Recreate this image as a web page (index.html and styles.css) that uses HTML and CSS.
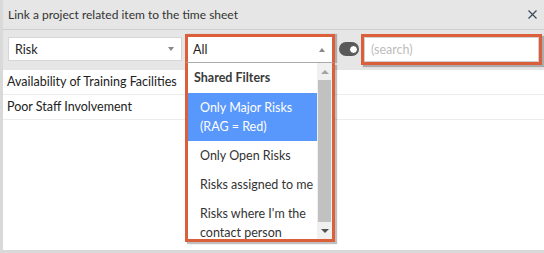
FILE: index.html
```html
<!DOCTYPE html>
<html>
<head>
<meta charset="utf-8">
<link rel="stylesheet" href="styles.css">
</head>
<body>
<div class="dialog">
  <div class="titlebar">
    <span class="title">Link a project related item to the time sheet</span>
    <svg class="close" width="9" height="9" viewBox="0 0 9 9"><path d="M0.5 0.5 L8.5 8.5 M8.5 0.5 L0.5 8.5" stroke="#3d4a5c" stroke-width="1.2" fill="none"/></svg>
  </div>
  <div class="toolbar">
    <div class="select risk"><span>Risk</span><span class="caret down"></span></div>
    <div class="filter">
      <div class="filter-select"><span>All</span><span class="caret up"></span></div>
      <div class="menu">
        <div class="menu-list">
          <div class="group">Shared Filters</div>
          <div class="opt active">Only Major Risks<br>(RAG = Red)</div>
          <div class="opt">Only Open Risks</div>
          <div class="opt">Risks assigned to me</div>
          <div class="opt">Risks where I'm the<br>contact person</div>
        </div>
        <div class="scrollbar">
          <div class="sb-btn"><span class="sb-arrow up-light"></span></div>
          <div class="sb-thumb"></div>
          <div class="sb-btn"><span class="sb-arrow down-dark"></span></div>
        </div>
      </div>
    </div>
    <div class="toggle"><span class="knob"></span></div>
    <div class="search-annot"><input class="search" type="text" placeholder="(search)"></div>
  </div>
  <div class="rows">
    <div class="row">Availability of Training Facilities</div>
    <div class="row">Poor Staff Involvement</div>
  </div>
</div>
</body>
</html>
```

FILE: styles.css
```css
html, body {
  margin: 0;
  padding: 0;
}
body {
  width: 544px;
  height: 253px;
  overflow: hidden;
  background: #d9d9d9;
  font-family: "Lato", "Open Sans", sans-serif;
  color: #333;
}
.dialog {
  margin-left: 3px;
  height: 250px;
  background: #fff;
  display: flex;
  flex-direction: column;
}
.titlebar {
  height: 29px;
  flex: none;
  border-bottom: 1px solid #cfcfcf;
  background: #e6e6e6;
  display: flex;
  align-items: center;
  justify-content: space-between;
  padding: 0 7px 0 5px;
}
.title {
  font-size: 12px;
  color: #333;
}
.close {
  display: block;
}
.toolbar {
  height: 40px;
  flex: none;
  box-sizing: border-box;
  background: #e6e6e6;
  display: flex;
  align-items: flex-start;
  padding: 4px 2px 0 5px;
  position: relative;
  z-index: 2;
}
.risk {
  margin-top: 3px;
  width: 174px;
  height: 24px;
  box-sizing: border-box;
  border: 1px solid #d6d6d6;
  background: #fff;
  display: flex;
  align-items: center;
  justify-content: space-between;
  padding: 0 7px 0 6px;
  font-size: 12.5px;
  color: #222;
}
.caret {
  width: 0;
  height: 0;
  border-left: 3px solid transparent;
  border-right: 3px solid transparent;
}
.caret.down {
  border-top: 4px solid #888;
}
.caret.up {
  border-bottom: 4px solid #888;
}
.filter {
  margin-left: 3px;
  width: 150px;
  position: relative;
}
.filter-select {
  height: 29px;
  box-sizing: border-box;
  border: 3px solid #dc5f3c;
  border-bottom: 1px solid #aaa;
  background: #fff;
  display: flex;
  align-items: center;
  justify-content: space-between;
  padding: 0 7px 0 5px;
  font-size: 12.5px;
  color: #222;
  box-shadow: 2px 0 1px rgba(0, 0, 0, 0.25);
}
.menu {
  position: absolute;
  top: 100%;
  left: 0;
  width: 150px;
  height: 179px;
  box-sizing: border-box;
  border: 3px solid #dc5f3c;
  border-top: 0;
  background: #fff;
  display: flex;
  box-shadow: 2px 2px 1px rgba(0, 0, 0, 0.25);
}
.menu-list {
  width: 129px;
  overflow: hidden;
  font-size: 12.5px;
  color: #333;
}
.group {
  height: 30px;
  line-height: 30px;
  padding-left: 6px;
  font-weight: 700;
  color: #3a3a3a;
}
.opt {
  padding: 5px 6px 5px 12px;
  line-height: 19px;
  white-space: nowrap;
}
.opt.active {
  background: #5897fb;
  color: #fff;
}
.scrollbar {
  width: 15px;
  background: #f0f0f0;
  display: flex;
  flex-direction: column;
}
.sb-btn {
  height: 17px;
  flex: none;
  display: flex;
  align-items: center;
  justify-content: center;
}
.sb-thumb {
  flex: 1;
  margin: 0 1px;
  background: #c1c1c1;
}
.sb-arrow {
  width: 0;
  height: 0;
  border-left: 4px solid transparent;
  border-right: 4px solid transparent;
}
.sb-arrow.up-light {
  border-bottom: 4px solid #a3a3a3;
}
.sb-arrow.down-dark {
  border-top: 4px solid #505050;
}
.toggle {
  margin: 8px 0 0 4px;
  width: 20px;
  height: 14px;
  border-radius: 7px;
  background: #595959;
  display: flex;
  align-items: center;
  justify-content: flex-end;
  padding-right: 1px;
  box-sizing: border-box;
}
.knob {
  width: 9px;
  height: 9px;
  box-sizing: border-box;
  border-radius: 50%;
  background: #fff;
  border: 1.5px solid #444;
}
.search-annot {
  margin-left: 2px;
  width: 181px;
  height: 31px;
  box-sizing: border-box;
  border: 3px solid #dc5f3c;
  box-shadow: 2px 2px 1px rgba(0, 0, 0, 0.25);
}
.search {
  display: block;
  width: 100%;
  height: 100%;
  box-sizing: border-box;
  margin: 0;
  border: 1px solid #d0d0d0;
  padding: 0 6px;
  font-family: "Lato", "Open Sans", sans-serif;
  font-size: 12.5px;
  color: #333;
  outline: none;
}
.search::placeholder {
  color: #bdbdbd;
}
.rows {
  flex: 1;
}
.row {
  height: 24px;
  line-height: 24px;
  border-bottom: 1px solid #ececec;
  padding-left: 4px;
  font-size: 12.5px;
  color: #222;
}
```
